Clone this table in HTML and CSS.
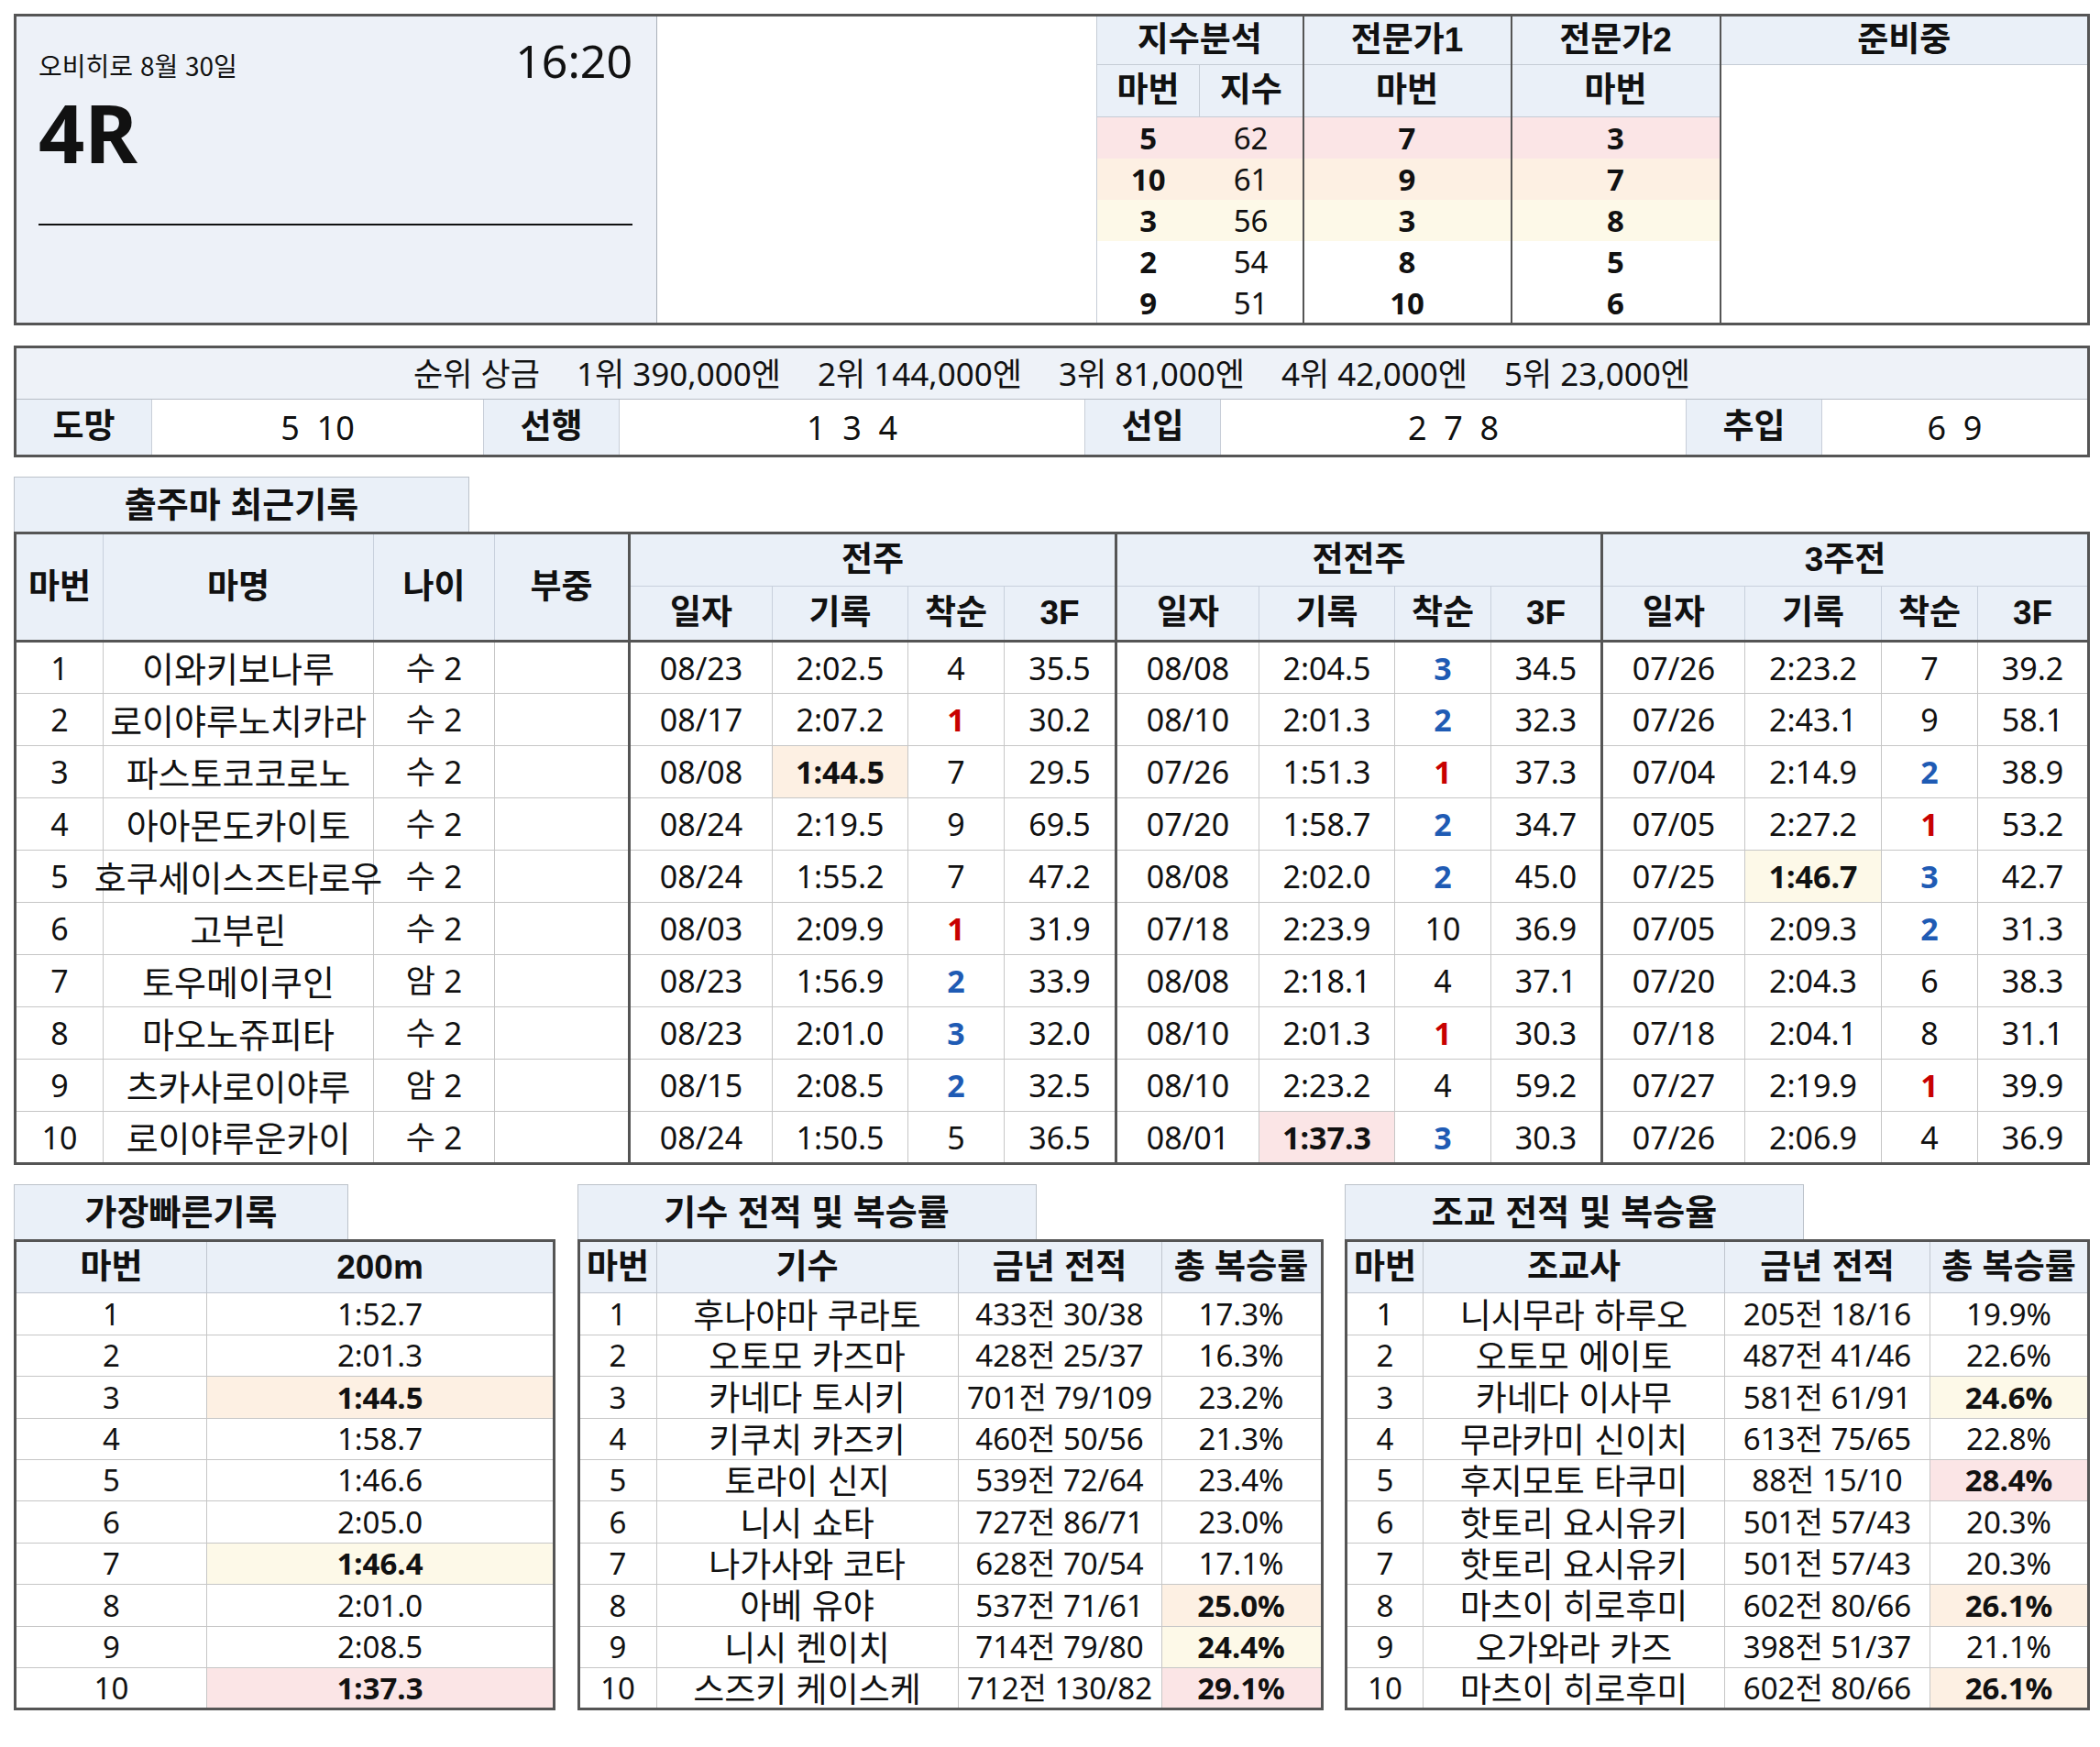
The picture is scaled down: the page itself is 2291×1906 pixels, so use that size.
FILE: index.html
```html
<!DOCTYPE html>
<html lang="ko">
<head>
<meta charset="utf-8">
<title>오비히로 4R</title>
<link rel="stylesheet" href="styles.css">
</head>
<body>
<div class="page">

<table class="top">
  <colgroup>
    <col class="w700"><col class="w480"><col class="w112"><col class="w113"><col class="w227"><col class="w228"><col class="w402">
  </colgroup>
  <tr class="h1">
    <td class="panel" rowspan="7">
      <div class="panel-in">
        <div class="panel-head">
          <span class="venue">오비히로 8월 30일</span>
          <span class="time">16:20</span>
        </div>
        <div class="race">4R</div>
        <div class="rule"></div>
      </div>
    </td>
    <td class="blank" rowspan="7"></td>
    <th colspan="2" class="lt">지수분석</th>
    <th class="dk">전문가1</th>
    <th class="dk">전문가2</th>
    <th class="dk">준비중</th>
  </tr>
  <tr class="h2">
    <th class="lt">마번</th>
    <th>지수</th>
    <th class="dk">마번</th>
    <th class="dk">마번</th>
    <td class="prep dk" rowspan="6"></td>
  </tr>
  <tr class="d r1"><td class="lt b">5</td><td>62</td><td class="dk b">7</td><td class="dk b">3</td></tr>
  <tr class="d r2"><td class="lt b">10</td><td>61</td><td class="dk b">9</td><td class="dk b">7</td></tr>
  <tr class="d r3"><td class="lt b">3</td><td>56</td><td class="dk b">3</td><td class="dk b">8</td></tr>
  <tr class="d"><td class="lt b">2</td><td>54</td><td class="dk b">8</td><td class="dk b">5</td></tr>
  <tr class="d"><td class="lt b">9</td><td>51</td><td class="dk b">10</td><td class="dk b">6</td></tr>
</table>

<table class="cat">
  <colgroup>
    <col class="w149"><col class="w362"><col class="w148"><col class="w508"><col class="w148"><col class="w508"><col class="w148"><col class="w291">
  </colgroup>
  <tr class="prize">
    <td colspan="8">
      <div class="items">
        <span>순위 상금</span>
        <span>1위 390,000엔</span>
        <span>2위 144,000엔</span>
        <span>3위 81,000엔</span>
        <span>4위 42,000엔</span>
        <span>5위 23,000엔</span>
      </div>
    </td>
  </tr>
  <tr class="kinds">
    <th>도망</th><td class="v">5  10</td>
    <th>선행</th><td class="v">1  3  4</td>
    <th>선입</th><td class="v">2  7  8</td>
    <th>추입</th><td class="v">6  9</td>
  </tr>
</table>

<div class="sec-tab main-tab">출주마 최근기록</div>
<table class="main">
  <colgroup>
    <col class="w96"><col class="w295"><col class="w132"><col class="w147">
    <col class="w156"><col class="w148"><col class="w105"><col class="w122">
    <col class="w156"><col class="w148"><col class="w105"><col class="w121">
    <col class="w156"><col class="w149"><col class="w105"><col class="w121">
  </colgroup>
  <thead>
    <tr class="mh1">
      <th rowspan="2" class="hb">마번</th>
      <th rowspan="2" class="hb">마명</th>
      <th rowspan="2" class="hb">나이</th>
      <th rowspan="2" class="hb">부중</th>
      <th colspan="4" class="g">전주</th>
      <th colspan="4" class="g">전전주</th>
      <th colspan="4" class="g">3주전</th>
    </tr>
    <tr class="mh2">
      <th class="g hb">일자</th><th class="hb">기록</th><th class="hb">착순</th><th class="hb">3F</th>
      <th class="g hb">일자</th><th class="hb">기록</th><th class="hb">착순</th><th class="hb">3F</th>
      <th class="g hb">일자</th><th class="hb">기록</th><th class="hb">착순</th><th class="hb">3F</th>
    </tr>
  </thead>
  <tbody>
    <tr>
      <td>1</td><td class="kr"><div class="fc">이와키보나루</div></td><td class="age">수 2</td><td></td>
      <td class="g">08/23</td><td>2:02.5</td><td>4</td><td>35.5</td>
      <td class="g">08/08</td><td>2:04.5</td><td class="blue">3</td><td>34.5</td>
      <td class="g">07/26</td><td>2:23.2</td><td>7</td><td>39.2</td>
    </tr>
    <tr>
      <td>2</td><td class="kr"><div class="fc">로이야루노치카라</div></td><td class="age">수 2</td><td></td>
      <td class="g">08/17</td><td>2:07.2</td><td class="red">1</td><td>30.2</td>
      <td class="g">08/10</td><td>2:01.3</td><td class="blue">2</td><td>32.3</td>
      <td class="g">07/26</td><td>2:43.1</td><td>9</td><td>58.1</td>
    </tr>
    <tr>
      <td>3</td><td class="kr"><div class="fc">파스토코코로노</div></td><td class="age">수 2</td><td></td>
      <td class="g">08/08</td><td class="hl-peach b">1:44.5</td><td>7</td><td>29.5</td>
      <td class="g">07/26</td><td>1:51.3</td><td class="red">1</td><td>37.3</td>
      <td class="g">07/04</td><td>2:14.9</td><td class="blue">2</td><td>38.9</td>
    </tr>
    <tr>
      <td>4</td><td class="kr"><div class="fc">아아몬도카이토</div></td><td class="age">수 2</td><td></td>
      <td class="g">08/24</td><td>2:19.5</td><td>9</td><td>69.5</td>
      <td class="g">07/20</td><td>1:58.7</td><td class="blue">2</td><td>34.7</td>
      <td class="g">07/05</td><td>2:27.2</td><td class="red">1</td><td>53.2</td>
    </tr>
    <tr>
      <td>5</td><td class="kr"><div class="fc">호쿠세이스즈타로우</div></td><td class="age">수 2</td><td></td>
      <td class="g">08/24</td><td>1:55.2</td><td>7</td><td>47.2</td>
      <td class="g">08/08</td><td>2:02.0</td><td class="blue">2</td><td>45.0</td>
      <td class="g">07/25</td><td class="hl-yellow b">1:46.7</td><td class="blue">3</td><td>42.7</td>
    </tr>
    <tr>
      <td>6</td><td class="kr"><div class="fc">고부린</div></td><td class="age">수 2</td><td></td>
      <td class="g">08/03</td><td>2:09.9</td><td class="red">1</td><td>31.9</td>
      <td class="g">07/18</td><td>2:23.9</td><td>10</td><td>36.9</td>
      <td class="g">07/05</td><td>2:09.3</td><td class="blue">2</td><td>31.3</td>
    </tr>
    <tr>
      <td>7</td><td class="kr"><div class="fc">토우메이쿠인</div></td><td class="age">암 2</td><td></td>
      <td class="g">08/23</td><td>1:56.9</td><td class="blue">2</td><td>33.9</td>
      <td class="g">08/08</td><td>2:18.1</td><td>4</td><td>37.1</td>
      <td class="g">07/20</td><td>2:04.3</td><td>6</td><td>38.3</td>
    </tr>
    <tr>
      <td>8</td><td class="kr"><div class="fc">마오노쥬피타</div></td><td class="age">수 2</td><td></td>
      <td class="g">08/23</td><td>2:01.0</td><td class="blue">3</td><td>32.0</td>
      <td class="g">08/10</td><td>2:01.3</td><td class="red">1</td><td>30.3</td>
      <td class="g">07/18</td><td>2:04.1</td><td>8</td><td>31.1</td>
    </tr>
    <tr>
      <td>9</td><td class="kr"><div class="fc">츠카사로이야루</div></td><td class="age">암 2</td><td></td>
      <td class="g">08/15</td><td>2:08.5</td><td class="blue">2</td><td>32.5</td>
      <td class="g">08/10</td><td>2:23.2</td><td>4</td><td>59.2</td>
      <td class="g">07/27</td><td>2:19.9</td><td class="red">1</td><td>39.9</td>
    </tr>
    <tr>
      <td>10</td><td class="kr"><div class="fc">로이야루운카이</div></td><td class="age">수 2</td><td></td>
      <td class="g">08/24</td><td>1:50.5</td><td>5</td><td>36.5</td>
      <td class="g">08/01</td><td class="hl-pink b">1:37.3</td><td class="blue">3</td><td>30.3</td>
      <td class="g">07/26</td><td>2:06.9</td><td>4</td><td>36.9</td>
    </tr>
  </tbody>
</table>

<div class="bottom">
  <div class="block blk-fast">
    <div class="sec-tab tab-fast">가장빠른기록</div>
    <table class="sub">
      <colgroup><col class="w209"><col class="w379"></colgroup>
      <tr class="sh"><th>마번</th><th>200m</th></tr>
      <tr><td>1</td><td>1:52.7</td></tr>
      <tr><td>2</td><td>2:01.3</td></tr>
      <tr><td>3</td><td class="hl-peach b">1:44.5</td></tr>
      <tr><td>4</td><td>1:58.7</td></tr>
      <tr><td>5</td><td>1:46.6</td></tr>
      <tr><td>6</td><td>2:05.0</td></tr>
      <tr><td>7</td><td class="hl-yellow b">1:46.4</td></tr>
      <tr><td>8</td><td>2:01.0</td></tr>
      <tr><td>9</td><td>2:08.5</td></tr>
      <tr><td>10</td><td class="hl-pink b">1:37.3</td></tr>
    </table>
  </div>

  <div class="block blk-jockey">
    <div class="sec-tab tab-wide">기수 전적 및 복승률</div>
    <table class="sub">
      <colgroup><col class="w85"><col class="w329"><col class="w222"><col class="w175"></colgroup>
      <tr class="sh"><th>마번</th><th>기수</th><th>금년 전적</th><th>총 복승률</th></tr>
      <tr><td>1</td><td class="kr"><div class="fc">후나야마 쿠라토</div></td><td class="rec"><div class="fc">433전 30/38</div></td><td>17.3%</td></tr>
      <tr><td>2</td><td class="kr"><div class="fc">오토모 카즈마</div></td><td class="rec"><div class="fc">428전 25/37</div></td><td>16.3%</td></tr>
      <tr><td>3</td><td class="kr"><div class="fc">카네다 토시키</div></td><td class="rec"><div class="fc">701전 79/109</div></td><td>23.2%</td></tr>
      <tr><td>4</td><td class="kr"><div class="fc">키쿠치 카즈키</div></td><td class="rec"><div class="fc">460전 50/56</div></td><td>21.3%</td></tr>
      <tr><td>5</td><td class="kr"><div class="fc">토라이 신지</div></td><td class="rec"><div class="fc">539전 72/64</div></td><td>23.4%</td></tr>
      <tr><td>6</td><td class="kr"><div class="fc">니시 쇼타</div></td><td class="rec"><div class="fc">727전 86/71</div></td><td>23.0%</td></tr>
      <tr><td>7</td><td class="kr"><div class="fc">나가사와 코타</div></td><td class="rec"><div class="fc">628전 70/54</div></td><td>17.1%</td></tr>
      <tr><td>8</td><td class="kr"><div class="fc">아베 유야</div></td><td class="rec"><div class="fc">537전 71/61</div></td><td class="hl-peach b">25.0%</td></tr>
      <tr><td>9</td><td class="kr"><div class="fc">니시 켄이치</div></td><td class="rec"><div class="fc">714전 79/80</div></td><td class="hl-yellow b">24.4%</td></tr>
      <tr><td>10</td><td class="kr"><div class="fc">스즈키 케이스케</div></td><td class="rec"><div class="fc">712전 130/82</div></td><td class="hl-pink b">29.1%</td></tr>
    </table>
  </div>

  <div class="block blk-trainer">
    <div class="sec-tab tab-wide">조교 전적 및 복승율</div>
    <table class="sub">
      <colgroup><col class="w84"><col class="w329"><col class="w224"><col class="w173"></colgroup>
      <tr class="sh"><th>마번</th><th>조교사</th><th>금년 전적</th><th>총 복승률</th></tr>
      <tr><td>1</td><td class="kr"><div class="fc">니시무라 하루오</div></td><td class="rec"><div class="fc">205전 18/16</div></td><td>19.9%</td></tr>
      <tr><td>2</td><td class="kr"><div class="fc">오토모 에이토</div></td><td class="rec"><div class="fc">487전 41/46</div></td><td>22.6%</td></tr>
      <tr><td>3</td><td class="kr"><div class="fc">카네다 이사무</div></td><td class="rec"><div class="fc">581전 61/91</div></td><td class="hl-yellow b">24.6%</td></tr>
      <tr><td>4</td><td class="kr"><div class="fc">무라카미 신이치</div></td><td class="rec"><div class="fc">613전 75/65</div></td><td>22.8%</td></tr>
      <tr><td>5</td><td class="kr"><div class="fc">후지모토 타쿠미</div></td><td class="rec"><div class="fc">88전 15/10</div></td><td class="hl-pink b">28.4%</td></tr>
      <tr><td>6</td><td class="kr"><div class="fc">핫토리 요시유키</div></td><td class="rec"><div class="fc">501전 57/43</div></td><td>20.3%</td></tr>
      <tr><td>7</td><td class="kr"><div class="fc">핫토리 요시유키</div></td><td class="rec"><div class="fc">501전 57/43</div></td><td>20.3%</td></tr>
      <tr><td>8</td><td class="kr"><div class="fc">마츠이 히로후미</div></td><td class="rec"><div class="fc">602전 80/66</div></td><td class="hl-peach b">26.1%</td></tr>
      <tr><td>9</td><td class="kr"><div class="fc">오가와라 카즈</div></td><td class="rec"><div class="fc">398전 51/37</div></td><td>21.1%</td></tr>
      <tr><td>10</td><td class="kr"><div class="fc">마츠이 히로후미</div></td><td class="rec"><div class="fc">602전 80/66</div></td><td class="hl-peach b">26.1%</td></tr>
    </table>
  </div>
</div>

</div>
</body>
</html>
```

FILE: styles.css
```css
* { box-sizing: border-box; }

body {
  margin: 0;
  padding: 15px;
  background: #ffffff;
  color: #111111;
  font-family: "Noto Sans", "Noto Sans CJK KR", sans-serif;
}

.page { width: 2262px; }

table {
  border-collapse: collapse;
  table-layout: fixed;
  width: 100%;
}

td, th {
  padding: 0;
  text-align: center;
  vertical-align: middle;
  white-space: nowrap;
  line-height: 1.2;
}

th {
  font-weight: 700;
  font-family: "Liberation Sans", "Noto Sans CJK KR", sans-serif;
}
.b { font-weight: 700; }

/* Hangul-dominant cells: compact Latin metrics, CJK glyphs */
.kr { font-family: "Liberation Sans", "Noto Sans CJK KR", sans-serif; }
td.kr {
  line-height: 1;
  padding-top: 5px;
}

.fc {
  display: flex;
  justify-content: center;
  white-space: nowrap;
}

/* column widths */
.w84 { width: 84px; } .w85 { width: 85px; } .w96 { width: 96px; }
.w105 { width: 105px; } .w112 { width: 112px; } .w113 { width: 113px; }
.w121 { width: 121px; } .w122 { width: 122px; } .w132 { width: 132px; }
.w147 { width: 147px; } .w148 { width: 148px; } .w149 { width: 149px; }
.w156 { width: 156px; } .w173 { width: 173px; } .w175 { width: 175px; }
.w209 { width: 209px; } .w222 { width: 222px; } .w224 { width: 224px; }
.w227 { width: 227px; } .w228 { width: 228px; } .w291 { width: 291px; }
.w295 { width: 295px; } .w329 { width: 329px; } .w362 { width: 362px; }
.w379 { width: 379px; } .w402 { width: 402px; } .w480 { width: 480px; }
.w508 { width: 508px; } .w700 { width: 700px; }

/* highlight colours */
.hl-pink { background: #fbe5e6; }
.hl-peach { background: #fdf0e3; }
.hl-yellow { background: #fdf9e8; }
.red { color: #c80000; font-weight: 700; }
.blue { color: #1f5bb4; font-weight: 700; }

/* ---------- top box ---------- */
.top { border: 3px solid #555555; }
.top .h1 { height: 54px; }
.top .h2 { height: 57px; }
.top .d { height: 45.3px; }

.top th {
  background: #eaf0f8;
  font-size: 37px;
  border-bottom: 1px solid #c5ccd6;
  border-left: 1px solid #c5ccd6;
}
.top td { font-size: 33px; }
.top .lt { border-left: 1px solid #c5ccd6; }
.top .dk { border-left: 2px solid #555555; }
.top .r1 td { background: #fbe5e6; }
.top .r2 td { background: #fdf0e3; }
.top .r3 td { background: #fdf9e8; }

.panel {
  background: #edf1f8;
  vertical-align: top;
  text-align: left;
  border-right: 1px solid #aab0b8;
}
.panel-in {
  padding: 23px 26px 0 24px;
  text-align: left;
}
.panel-head {
  display: flex;
  justify-content: space-between;
  align-items: center;
}
.venue {
  font-family: "Noto Sans CJK KR", sans-serif;
  font-size: 28px;
  margin-top: 10px;
  line-height: 1;
}
.time {
  font-size: 50px;
  line-height: 1;
}
.race {
  font-size: 88px;
  font-weight: 700;
  line-height: 1;
  margin-top: 9px;
}
.rule {
  height: 2px;
  background: #111111;
  margin-top: 56px;
}
.blank {
  background: #ffffff;
  border-right: 1px solid #c5ccd6;
}
.prep { background: #ffffff; }

/* ---------- category box ---------- */
.cat {
  margin-top: 22px;
  border: 3px solid #555555;
}
.prize { height: 57px; }
.prize td {
  background: #eef2f8;
  border-bottom: 1px solid #b8bec6;
}
.items {
  display: flex;
  justify-content: center;
  gap: 40px;
  font-size: 35px;
}
.kinds { height: 62px; }
.kinds th {
  background: #eaf0f8;
  font-size: 37px;
  border-left: 1px solid #c8ced8;
  border-right: 1px solid #c8ced8;
}
.kinds td.v {
  font-size: 36px;
  white-space: pre;
  background: #ffffff;
}

/* ---------- section tabs ---------- */
.sec-tab {
  background: #eaf0f8;
  border: 1px solid #bcc2ca;
  border-bottom: none;
  font-family: "Liberation Sans", "Noto Sans CJK KR", sans-serif;
  font-size: 38px;
  font-weight: 700;
  display: flex;
  align-items: center;
  justify-content: center;
  line-height: 1;
}
.main-tab {
  width: 497px;
  height: 60px;
  margin-top: 21px;
}

/* ---------- main table ---------- */
.main { border: 3px solid #555555; }
.main .mh1 { height: 58px; }
.main .mh2 { height: 60px; }
.main th {
  background: #eaf0f8;
  font-size: 37px;
  border: 1px solid #c8d0dc;
}
.main th.hb { border-bottom: 3px solid #555555; }
.main td {
  font-size: 34px;
  height: 57px;
  border: 1px solid #c6c6c6;
}
.main td.kr { font-size: 38px; }
.main td.age { font-size: 35px; }
.main .g { border-left: 3px solid #555555; }

/* ---------- bottom tables ---------- */
.bottom {
  display: flex;
  justify-content: space-between;
  margin-top: 21px;
}
.blk-fast { width: 588px; }
.blk-jockey { width: 811px; }
.blk-trainer { width: 810px; }
.tab-fast { width: 365px; height: 60px; }
.tab-wide { width: 501px; height: 60px; }

.sub { border: 3px solid #555555; }
.sub .sh { height: 57px; }
.sub th {
  background: #eaf0f8;
  font-size: 37px;
  border: 1px solid #c0c6cf;
}
.sub td {
  font-size: 33px;
  height: 45.4px;
  border: 1px solid #c6c6c6;
}
.sub td.kr { font-size: 37px; }
.sub td.rec { font-size: 33px; }
```
